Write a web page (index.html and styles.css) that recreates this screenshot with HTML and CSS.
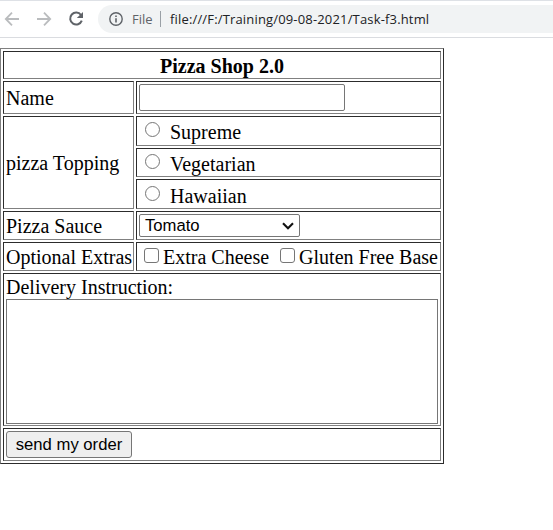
FILE: index.html
```html
<!DOCTYPE html>
<html lang="en">
<head>
<meta charset="utf-8">
<title>Pizza Shop 2.0</title>
<link rel="stylesheet" href="styles.css">
</head>
<body>
<header class="toolbar">
  <svg class="nav" width="98" height="36" viewBox="0 0 98 36" fill="none" stroke-width="1.8">
    <path class="dim" d="M19 18H6M12 11.7L5.8 18L12 24.3"/>
    <path class="dim" d="M37 18H50M44 11.7L50.2 18L44 24.3"/>
    <path class="dark" d="M81 14A6 6 0 1 0 81.8 19.7"/>
    <path class="head" d="M83 10.9V17.1H76.8Z"/>
  </svg>
  <div class="address">
    <svg class="info" width="14" height="14" viewBox="0 0 14 14">
      <circle cx="7" cy="7" r="6.2" fill="none" stroke="#5f6368" stroke-width="1.4"/>
      <path d="M6.2 3.5h1.6v1.5H6.2zM6.2 6.2h1.6v4.3H6.2z" fill="#5f6368"/>
    </svg>
    <span class="scheme">File</span>
    <span class="divider"></span>
    <span class="url">file:///F:/Training/09-08-2021/Task-f3.html</span>
  </div>
</header>
<form>
  <table class="order">
    <colgroup><col class="label-col"><col class="field-col"></colgroup>
    <tr class="row-title"><th colspan="2">Pizza Shop 2.0</th></tr>
    <tr class="row-name"><td class="low">Name</td><td><input class="name" type="text"></td></tr>
    <tr class="row-a"><td class="low" rowspan="3">pizza Topping</td><td><label class="choice"><input type="radio" name="topping">Supreme</label></td></tr>
    <tr class="row-b"><td><label class="choice middle"><input type="radio" name="topping">Vegetarian</label></td></tr>
    <tr class="row-a"><td><label class="choice last"><input type="radio" name="topping">Hawaiian</label></td></tr>
    <tr class="row-b"><td class="low">Pizza Sauce</td><td>
      <div class="select">Tomato<svg width="12" height="8" viewBox="0 0 12 8"><path d="M1 1.2L6 6.2L11 1.2" fill="none" stroke="#111" stroke-width="2.1"/></svg></div>
    </td></tr>
    <tr class="row-b"><td class="low">Optional Extras</td><td>
      <div class="extras"><label><input type="checkbox">Extra Cheese</label><label><input type="checkbox">Gluten Free Base</label></div>
    </td></tr>
    <tr class="row-note"><td colspan="2"><div class="caption">Delivery Instruction:</div><textarea></textarea></td></tr>
    <tr class="row-name"><td colspan="2"><button type="button">send my order</button></td></tr>
  </table>
</form>
</body>
</html>
```
FILE: styles.css
```css
* { box-sizing: border-box; }
body {
  margin: 0;
  background: #fff;
  color: #000;
  font: 20px/23px "Liberation Serif", serif;
  overflow: hidden;
}
.toolbar {
  display: flex;
  height: 38px;
  border-top: 1px solid #dee1e6;
  border-bottom: 1px solid #dadce0;
}
.nav { flex: none; }
.dim { stroke: #babcbe; }
.dark { stroke: #5f6368; stroke-width: 2; }
.head { fill: #5f6368; }
.address {
  display: flex;
  align-items: center;
  flex: 1;
  height: 28px;
  margin-top: 4px;
  padding-left: 11px;
  background: #f1f3f4;
  border-radius: 14px 0 0 14px;
  font: 13px/28px "Open Sans", sans-serif;
  color: #202124;
  white-space: nowrap;
}
.info { flex: none; }
.scheme { width: 28px; margin-left: 9px; color: #5f6368; }
.divider { width: 1px; height: 16px; background: #9aa0a6; }
.url { margin-left: 9px; letter-spacing: 0.165px; }
form { margin: 10px 0 0; }
.order {
  width: 444px;
  table-layout: fixed;
  border: 1px solid;
  border-color: #808080 #2c2c2c #2c2c2c #808080;
  border-spacing: 2px;
}
.label-col { width: 131px; }
.field-col { width: 305px; }
th, td {
  padding: 0 2px;
  border: 1px solid;
  border-color: #2c2c2c #808080 #808080 #2c2c2c;
  vertical-align: middle;
  white-space: nowrap;
}
th, .low { padding-top: 2px; }
.row-title { height: 28px; }
.row-name { height: 33px; }
.row-a { height: 30px; }
.row-b { height: 29px; }
.row-note { height: 153px; }
input, textarea, button { display: block; margin: 0; }
.name {
  width: 206px;
  height: 27px;
  border: 1px solid #767676;
  border-radius: 2px;
}
input[type="radio"], input[type="checkbox"] {
  appearance: none;
  flex: none;
  width: 15px;
  height: 15px;
  border: 1px solid #767676;
  background: #fff;
}
input[type="radio"] { border-radius: 50%; margin: 0 10px 5px 6px; }
input[type="checkbox"] { border-radius: 3px; margin: 0 4px 3px 0; }
.choice, .extras, .extras label { display: flex; align-items: center; }
.choice { padding-top: 2px; }
.middle { padding-top: 3px; }
.last { padding-top: 4px; }
.extras { gap: 11px; padding: 1px 0 0 5px; }
.select {
  display: flex;
  align-items: center;
  justify-content: space-between;
  width: 161px;
  height: 23px;
  padding: 0 5px;
  border: 1px solid #767676;
  border-radius: 2px;
  font: 16.67px/21px "Liberation Sans", sans-serif;
}
.caption { height: 25px; padding-top: 2px; }
textarea {
  width: 432px;
  height: 126px;
  margin-bottom: 1px;
  border: 1px solid #767676;
  resize: none;
}
.row-note td { vertical-align: top; }
.row-note textarea { height: 125px; margin: 0; }
button {
  width: 126px;
  height: 27px;
  padding: 0;
  border: 1px solid #767676;
  border-radius: 3px;
  background: #efefef;
  color: #000;
  font: 16.67px/24px "Liberation Sans", sans-serif;
}
```
